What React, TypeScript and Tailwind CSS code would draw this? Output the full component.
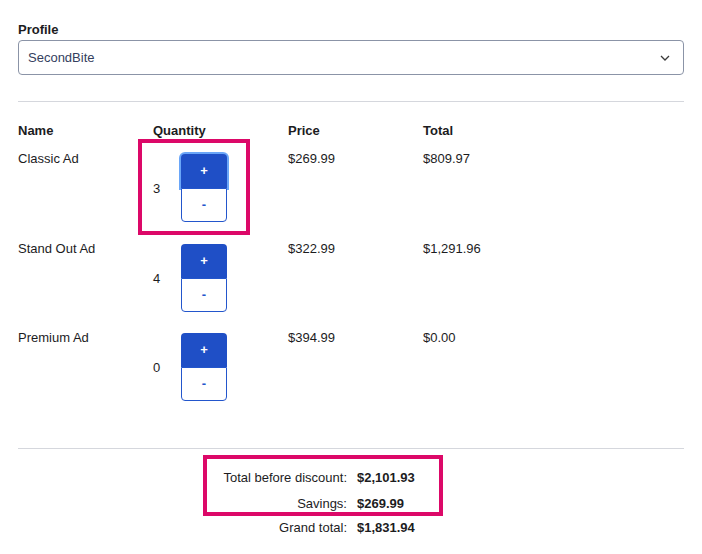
import { useState } from 'react';

interface Product {
  id: string;
  name: string;
  price: number;
  total: number;
}

const products: Product[] = [
  { id: 'classic', name: 'Classic Ad', price: 269.99, total: 809.97 },
  { id: 'standout', name: 'Stand Out Ad', price: 322.99, total: 1291.96 },
  { id: 'premium', name: 'Premium Ad', price: 394.99, total: 0 },
];

const money = (n: number) =>
  '$' + n.toLocaleString('en-US', { minimumFractionDigits: 2, maximumFractionDigits: 2 });

function QuantityControl({ value, focused }: { value: number; focused?: boolean }) {
  return (
    <div className="flex items-center">
      <span className="w-[28px] pt-[1px] leading-[16px]">{value}</span>
      <div className="flex w-[46px] flex-col">
        <button
          className={`h-[34px] rounded-t-[4px] bg-[#1f4fc6] text-[13px] font-bold text-white ${
            focused ? 'ring-2 ring-[#6aa6f8]' : ''
          }`}
        >
          +
        </button>
        <button className="h-[34px] rounded-b-[4px] border-[1.5px] border-[#2356cc] bg-white text-[13px] font-bold text-[#2356cc]">
          -
        </button>
      </div>
    </div>
  );
}

function App() {
  const [profile] = useState('SecondBite');

  return (
    <div className="min-h-screen bg-white px-[18px] pt-[22px] font-['Liberation_Sans',Arial,sans-serif] text-[13px] text-[#1c1c1e]">
      <div className="font-bold leading-[16px]">Profile</div>
      <div className="mt-[2px] flex h-[35px] items-center justify-between rounded-[4px] border border-[#8b94a7] pl-[9px] pr-[13px] text-[#34405e]">
        <span>{profile}</span>
        <svg width="10" height="6" viewBox="0 0 10 6" fill="none">
          <path d="M1 1l4 4 4-4" stroke="#3a3a3a" strokeWidth="1.3" />
        </svg>
      </div>

      <div className="mt-[26px] border-t border-[#d5d7dd]" />

      <div className="mt-[21px] grid grid-cols-[135px_135px_135px_135px] font-bold leading-[16px]">
        <div>Name</div>
        <div>Quantity</div>
        <div>Price</div>
        <div>Total</div>
      </div>

      <div className="mt-[11px]">
        {products.map((p, i) => (
          <div
            key={p.id}
            className={`grid grid-cols-[135px_135px_135px_135px] leading-[16px] ${
              i === 0 ? 'h-[90px]' : 'h-[89px]'
            }`}
          >
            <div className="pt-[1px]">{p.name}</div>
            <div className="relative pt-[4px]">
              <QuantityControl value={[3, 4, 0][i]} focused={i === 0} />
              {i === 0 && (
                <div className="pointer-events-none absolute left-[-15px] top-[-11px] h-[96px] w-[112px] border-4 border-[#dc0868]" />
              )}
            </div>
            <div className="pt-[1px]">{money(p.price)}</div>
            <div className="pt-[1px]">{money(p.total)}</div>
          </div>
        ))}
      </div>

      <div className="mt-[30px] border-t border-[#d5d7dd]" />

      <div className="ml-[185px] mt-[6px] w-[240px] leading-[16px]">
        <div className="flex flex-col gap-[10px] border-4 border-[#dc0868] pt-[11px]">
          <div className="flex gap-[10px]">
            <span className="w-[140px] text-right">Total before discount:</span>
            <span className="font-bold">$2,101.93</span>
          </div>
          <div className="flex gap-[10px]">
            <span className="w-[140px] text-right">Savings:</span>
            <span className="font-bold">$269.99</span>
          </div>
        </div>
        <div className="ml-[4px] mt-[4px] flex gap-[10px]">
          <span className="w-[140px] text-right">Grand total:</span>
          <span className="font-bold">$1,831.94</span>
        </div>
      </div>
    </div>
  );
}

export default App;
